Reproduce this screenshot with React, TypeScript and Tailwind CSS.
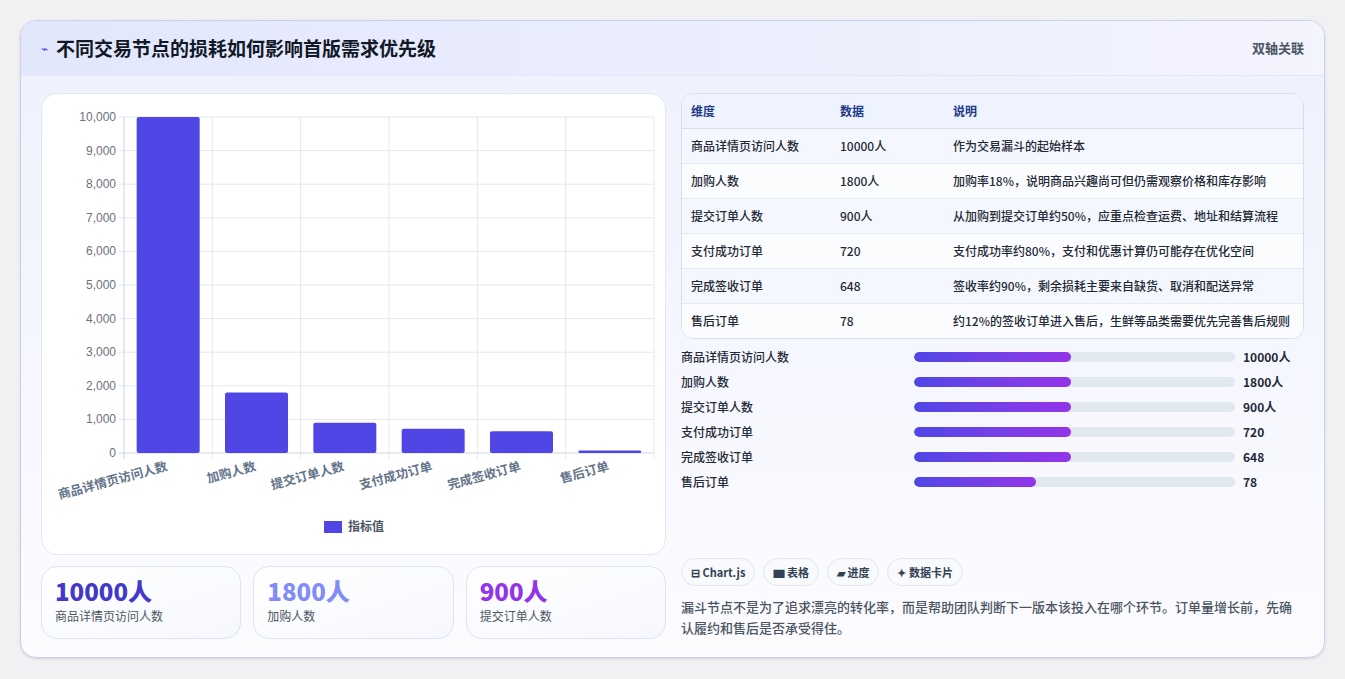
const rows = [
  { name: '商品详情页访问人数', value: '10000人', note: '作为交易漏斗的起始样本', n: 10000, pct: 49 },
  { name: '加购人数', value: '1800人', note: '加购率18%，说明商品兴趣尚可但仍需观察价格和库存影响', n: 1800, pct: 49 },
  { name: '提交订单人数', value: '900人', note: '从加购到提交订单约50%，应重点检查运费、地址和结算流程', n: 900, pct: 49 },
  { name: '支付成功订单', value: '720', note: '支付成功率约80%，支付和优惠计算仍可能存在优化空间', n: 720, pct: 49 },
  { name: '完成签收订单', value: '648', note: '签收率约90%，剩余损耗主要来自缺货、取消和配送异常', n: 648, pct: 49 },
  { name: '售后订单', value: '78', note: '约12%的签收订单进入售后，生鲜等品类需要优先完善售后规则', n: 78, pct: 38 },
];

function BarChart() {
  const x0 = 82, x1 = 612, y0 = 23, y1 = 359;
  const cw = (x1 - x0) / 6;
  const ticks = [0, 1000, 2000, 3000, 4000, 5000, 6000, 7000, 8000, 9000, 10000];
  const yOf = (v: number) => y1 - (v / 10000) * (y1 - y0);
  return (
    <svg width="625" height="462" viewBox="0 0 625 462" style={{ fontFamily: '"Liberation Sans", "Noto Sans CJK SC", sans-serif' }}>
      {ticks.map((t) => (
        <g key={t}>
          <line x1={x0 - 5} x2={x1} y1={yOf(t)} y2={yOf(t)} stroke={t === 0 ? '#cbd5e1' : '#e5e7eb'} />
          <text x={x0 - 8} y={yOf(t) + 4} textAnchor="end" fontSize="12" fill="#6b7280">
            {t.toLocaleString('en-US')}
          </text>
        </g>
      ))}
      {Array.from({ length: 7 }).map((_, i) => (
        <line key={i} x1={x0 + i * cw} x2={x0 + i * cw} y1={y0} y2={y1 + 6} stroke={i === 0 ? '#cbd5e1' : '#e5e7eb'} />
      ))}
      {rows.map((r, i) => {
        const cx = x0 + cw * i + cw / 2;
        const top = yOf(r.n);
        return (
          <g key={r.name}>
            <rect x={cx - 31.5} y={top} width="63" height={Math.max(y1 - top, 2)} rx="2" fill="#4f46e5" />
            <text x={cx} y={376} textAnchor="end" fontSize="12.5" fontWeight="600" fill="#64748b" transform={`rotate(-15 ${cx} 376)`}>
              {r.name}
            </text>
          </g>
        );
      })}
      <rect x="282" y="427" width="18" height="12" fill="#4f46e5" />
      <text x="306" y="437" fontSize="12" fontWeight="600" fill="#4b5563">指标值</text>
    </svg>
  );
}

export default function App() {
  return (
    <div className="min-h-screen bg-[#f1f1f3] pt-5 pl-5 pr-5" style={{ fontFamily: '"Noto Sans CJK SC", "Noto Sans", sans-serif' }}>
      <div className="w-[1305px] h-[638px] rounded-2xl border border-[#c9d0f5] bg-gradient-to-b from-[#eef1fd] to-[#fcfcff] overflow-hidden shadow-sm">
        <div className="h-[55px] flex items-center justify-between px-5 bg-gradient-to-r from-[#e3e7fc] to-[#f3f4fe] border-b border-[#e3e7f7]">
          <div className="flex items-center gap-2">
            <span className="text-[#4f46e5] text-xs">⌁</span>
            <h1 className="text-[19px] font-bold text-[#111827]">不同交易节点的损耗如何影响首版需求优先级</h1>
          </div>
          <span className="text-[13px] font-semibold text-[#4b5563]">双轴关联</span>
        </div>
        <div className="flex gap-[15px] px-5 pt-[17px]">
          <div className="w-[625px] flex flex-col gap-[11px]">
            <div className="h-[462px] rounded-2xl border border-[#e2e8f0] bg-white">
              <BarChart />
            </div>
            <div className="grid grid-cols-3 gap-3">
              {[
                { v: '10000人', l: '商品详情页访问人数', c: 'text-[#4338ca]' },
                { v: '1800人', l: '加购人数', c: 'text-[#818cf8]' },
                { v: '900人', l: '提交订单人数', c: 'text-[#9333ea]' },
              ].map((s) => (
                <div key={s.l} className="h-[73px] rounded-2xl border border-[#dbe5f3] bg-gradient-to-br from-white to-[#f6f8fe] px-[13px] pt-[9px]">
                  <div className={`text-[24px] leading-[30px] font-extrabold ${s.c}`}>{s.v}</div>
                  <div className="text-xs text-[#4b5563] mt-0.5">{s.l}</div>
                </div>
              ))}
            </div>
          </div>
          <div className="w-[625px] flex flex-col">
            <div className="rounded-xl border border-[#d6def0] bg-white overflow-hidden">
              <table className="w-full text-xs text-[#1f2937]">
                <thead>
                  <tr className="h-[34px] bg-[#eef3fd] text-[#1e3a8a] font-semibold text-left border-b border-[#d6def0]">
                    <th className="pl-[9px] w-[158px] font-semibold">维度</th>
                    <th className="w-[113px] font-semibold">数据</th>
                    <th className="font-semibold">说明</th>
                  </tr>
                </thead>
                <tbody>
                  {rows.map((r, i) => (
                    <tr key={r.name} className={`h-[35px] ${i % 2 === 0 ? 'bg-[#f4f7fd]' : 'bg-[#fbfcfe]'} ${i < 5 ? 'border-b border-[#e5eaf3]' : ''}`}>
                      <td className="pl-[9px] font-medium">{r.name}</td>
                      <td className="font-medium">{r.value}</td>
                      <td className="font-medium">{r.note}</td>
                    </tr>
                  ))}
                </tbody>
              </table>
            </div>
            <div className="mt-[10px] flex flex-col gap-[9px]">
              {rows.map((r) => (
                <div key={r.name} className="flex items-center h-4 text-xs font-medium text-[#1f2937]">
                  <div className="w-[233px]">{r.name}</div>
                  <div className="w-[321px] h-[10px] rounded-full bg-[#e2e8f0] overflow-hidden">
                    <div className="h-full rounded-full bg-gradient-to-r from-[#4f46e5] to-[#9333ea]" style={{ width: `${r.pct}%` }} />
                  </div>
                  <div className="ml-2 font-bold">{r.value}</div>
                </div>
              ))}
            </div>
            <div className="mt-[68px] flex gap-2">
              {['⊟ Chart.js', '▆ 表格', '▰ 进度', '✦ 数据卡片'].map((t) => (
                <span key={t} className="h-7 px-[9px] flex items-center rounded-full border border-[#e2e8f0] bg-[#f8fafc] text-[11px] font-semibold text-[#334155]">
                  {t}
                </span>
              ))}
            </div>
            <p className="mt-[10px] text-[13px] leading-[21px] font-medium text-[#4b5563]">
              漏斗节点不是为了追求漂亮的转化率，而是帮助团队判断下一版本该投入在哪个环节。订单量增长前，先确认履约和售后是否承受得住。
            </p>
          </div>
        </div>
      </div>
    </div>
  );
}
